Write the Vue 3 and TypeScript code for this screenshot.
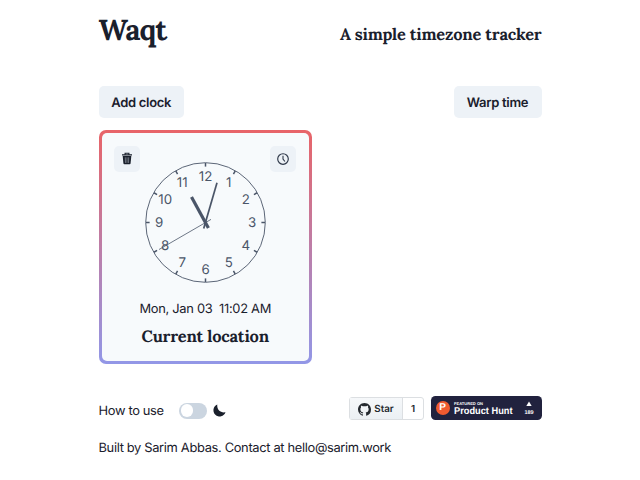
<script setup lang="ts">
interface Mark {
  label: number
  x: number
  y: number
  angle: number
}

const marks: Mark[] = Array.from({ length: 12 }, (_, i) => {
  const label = i + 1
  const rad = (label * Math.PI) / 6
  return {
    label,
    x: 60.5 + 46.5 * Math.sin(rad),
    y: 60.5 - 46.5 * Math.cos(rad),
    angle: label * 30,
  }
})
</script>

<template>
  <main class="page">
    <header class="header">
      <h1 class="brand">Waqt</h1>
      <h2 class="tagline">A simple timezone tracker</h2>
    </header>

    <div class="actions">
      <button class="btn add">Add clock</button>
      <button class="btn warp">Warp time</button>
    </div>

    <section class="card">
      <div class="card-body">
        <div class="tools">
          <button class="icon-btn" aria-label="Delete">
            <svg width="12" height="13" viewBox="0 0 12 13">
              <path d="M1 2.900h10M4.100 2.600V1.200h3.800v1.400" fill="none" stroke="#1a202c" stroke-width="1.100" />
              <path d="M1.700 4h8.600l-.7 7.300q-.1 1-1 1H3.400q-.9 0-1-1z" fill="#1a202c" />
              <path d="M4.300 5.300l.2 5.600M7.700 5.300l-.2 5.600M6 5.300v5.600" stroke="#a4abb5" stroke-width=".6" />
            </svg>
          </button>
          <button class="icon-btn" aria-label="Set time">
            <svg width="12" height="12" viewBox="0 0 12 12" fill="none" stroke="#2d3748">
              <circle cx="6" cy="6" r="5.300" stroke-width="1.150" />
              <path d="M6 2.700V6l1.900 2.500" stroke-width="1.100" />
            </svg>
          </button>
        </div>
        <svg class="clock" width="121" height="121" viewBox="0 0 121 121">
          <circle cx="60.5" cy="60.5" r="59.8" fill="none" stroke="#4a5568" stroke-width=".9" />
          <g v-for="m in marks" :key="m.label">
            <line
              x1="60.5" y1="1" x2="60.5" y2="4.600"
              stroke="#4a5568" stroke-width="1.500"
              :transform="`rotate(${m.angle} 60.5 60.5)`"
            />
            <text class="num" :x="m.x" :y="m.y + 4.7">{{ m.label }}</text>
          </g>
          <line x1="66" y1="57.400" x2="14" y2="87.500" stroke="#4a5568" stroke-width=".8" />
          <line x1="58.700" y1="66.500" x2="72" y2="20.700" stroke="#4a5568" stroke-width="1.700" />
          <line x1="63.400" y1="66" x2="46.500" y2="35" stroke="#4a5568" stroke-width="3.200" />
        </svg>
        <p class="date">Mon, Jan 03&nbsp; 11:02 AM</p>
        <h3 class="place">Current location</h3>
      </div>
    </section>

    <footer class="footer">
      <span class="how">How to use</span>
      <span class="switch"><span class="knob"></span></span>
      <svg class="moon" width="13" height="13" viewBox="0 0 13 13">
        <path d="M4.300.5C3.700 5.400 7.200 9.200 12.500 8.300A6.200 6.200 0 1 1 4.300.5z" fill="#1a202c" />
      </svg>
      <span class="star">
        <span class="star-main">
          <svg width="13" height="13" viewBox="0 0 16 16">
            <path fill="#24292f" d="M8 0C3.580 0 0 3.580 0 8c0 3.540 2.290 6.530 5.470 7.590.4.070.55-.17.55-.38 0-.19-.01-.82-.01-1.490-2.010.37-2.530-.49-2.690-.94-.09-.23-.48-.94-.82-1.130-.28-.15-.68-.52-.01-.53.63-.01 1.080.58 1.230.82.720 1.210 1.870.87 2.330.66.070-.52.28-.87.51-1.070-1.780-.2-3.640-.89-3.640-3.950 0-.87.31-1.590.82-2.150-.08-.2-.36-1.020.08-2.120 0 0 .67-.21 2.200.82a7.600 7.600 0 0 1 4 0c1.530-1.040 2.200-.82 2.200-.82.44 1.100.16 1.920.08 2.120.51.56.82 1.270.82 2.150 0 3.070-1.870 3.750-3.650 3.950.29.25.54.73.54 1.480 0 1.070-.01 1.930-.01 2.200 0 .21.15.46.55.38A8.010 8.010 0 0 0 16 8c0-4.420-3.580-8-8-8z" />
          </svg>
          Star
        </span>
        <span class="star-count">1</span>
      </span>
      <span class="hunt">
        <span class="hunt-logo">P</span>
        <svg class="hunt-text" width="64" height="18" viewBox="0 0 64 18">
          <text x="1" y="5.200" class="hunt-small" textLength="29" lengthAdjust="spacingAndGlyphs">FEATURED ON</text>
          <text x="1" y="14.200" class="hunt-big" textLength="58.500" lengthAdjust="spacingAndGlyphs">Product Hunt</text>
        </svg>
        <svg class="votes" width="12" height="16" viewBox="0 0 12 16">
          <path d="M6 1.500l2.700 4.600H3.300z" fill="#fff" />
          <text x="6" y="13.700" class="vote-num">189</text>
        </svg>
      </span>
    </footer>

    <p class="credit">Built by Sarim Abbas. Contact at hello@sarim.work</p>
  </main>
</template>

<style>
body {
  margin: 0;
  background: #fff;
}
</style>

<style scoped>
.page {
  box-sizing: border-box;
  width: 640px;
  height: 480px;
  padding: 10px 98.5px 0;
  overflow: hidden;
  background: #fff;
  color: #1a202c;
  font-family: Inter, "Liberation Sans", sans-serif;
  font-size: 12.9px;
  letter-spacing: -0.34px;
  text-rendering: geometricPrecision;
}
h1, h2, h3, p {
  margin: 0;
  white-space: nowrap;
}
h1, h2, h3 {
  font-family: Lora, "Noto Serif", "Liberation Serif", serif;
  font-weight: 700;
}
.header {
  display: flex;
  justify-content: space-between;
  height: 75.5px;
}
.brand {
  font-size: 29px;
  line-height: 40px;
  letter-spacing: -0.8px;
}
.tagline {
  font-size: 16.400px;
  line-height: 51px;
  letter-spacing: -0.2px;
}
.actions {
  display: flex;
  justify-content: space-between;
  height: 44.5px;
}
.btn, .icon-btn {
  display: flex;
  align-items: center;
  justify-content: center;
  padding: 0;
  border: 0;
  border-radius: 5px;
  background: #edf2f7;
  color: #1a202c;
}
.btn {
  width: 85.5px;
  height: 32px;
  padding-top: 2px;
  font: 600 13px Inter, "Liberation Sans", sans-serif;
  letter-spacing: -0.3px;
  text-rendering: geometricPrecision;
  white-space: nowrap;
}
.warp {
  width: 88px;
}
.card {
  box-sizing: border-box;
  width: 213.5px;
  height: 234px;
  padding: 3.400px;
  border-radius: 7px;
  background: linear-gradient(#e86468, #9297e7);
}
.card-body {
  display: flex;
  flex-direction: column;
  align-items: center;
  height: 100%;
  border-radius: 5px;
  background: #f7fafc;
}
.tools {
  box-sizing: border-box;
  display: flex;
  justify-content: space-between;
  width: 100%;
  padding: 12.500px 12.500px 0;
}
.icon-btn {
  width: 26px;
  height: 26px;
}
.clock {
  flex: none;
  margin-top: -10px;
}
.num {
  fill: #4a5568;
  font-size: 13.300px;
  letter-spacing: 0;
  text-anchor: middle;
}
.date {
  margin-top: 17.200px;
  line-height: 20px;
  letter-spacing: -0.3px;
}
.place {
  margin-top: 5.300px;
  font-size: 16.400px;
  line-height: 24px;
  letter-spacing: -0.2px;
}
.footer {
  display: flex;
  align-items: center;
  height: 26px;
  margin-top: 31.500px;
}
.how {
  width: 80.500px;
  padding-top: 5px;
  white-space: nowrap;
}
.switch {
  box-sizing: border-box;
  width: 27.500px;
  height: 16px;
  margin-top: 4px;
  padding: 1.700px;
  border-radius: 8px;
  background: #cbd5e0;
}
.knob {
  display: block;
  width: 12.600px;
  height: 12.600px;
  border-radius: 50%;
  background: #fff;
}
.moon {
  margin: 4px 0 0 6.500px;
}
.star {
  box-sizing: border-box;
  display: flex;
  width: 75px;
  height: 22.500px;
  margin: 0 0 0 auto;
  border: 1px solid #dcdfe2;
  border-radius: 3px;
  font-size: 9.800px;
  font-weight: 600;
  letter-spacing: 0;
  color: #24292f;
}
.star-main, .star-count {
  display: flex;
  align-items: center;
  justify-content: center;
  padding-top: 1px;
}
.star-main {
  gap: 3px;
  width: 52px;
  border-right: 1px solid #dcdfe2;
  background: linear-gradient(#f6f8fa, #ebf0f4);
}
.star-count {
  flex: 1;
}
.hunt {
  display: flex;
  align-items: center;
  width: 111px;
  height: 24px;
  margin: -1px 0 0 6.500px;
  border-radius: 4.500px;
  background: #21223e;
  letter-spacing: 0;
}
.hunt-logo {
  width: 14px;
  height: 14px;
  margin-left: 5px;
  border-radius: 50%;
  background: #f05a30;
  color: #fff;
  font: 700 10px/14.500px "Liberation Sans", sans-serif;
  text-align: center;
}
.hunt-text {
  margin: 1px 0 0 3px;
  fill: #fff;
  font-family: "Liberation Sans", sans-serif;
  font-weight: 700;
}
.hunt-small {
  font-size: 4px;
}
.hunt-big {
  font-size: 10px;
}
.votes {
  margin-left: 6px;
}
.vote-num {
  fill: #fff;
  font: 700 5.500px "Liberation Sans", sans-serif;
  text-anchor: middle;
}
.credit {
  margin-top: 17.300px;
  line-height: 20px;
}
</style>
